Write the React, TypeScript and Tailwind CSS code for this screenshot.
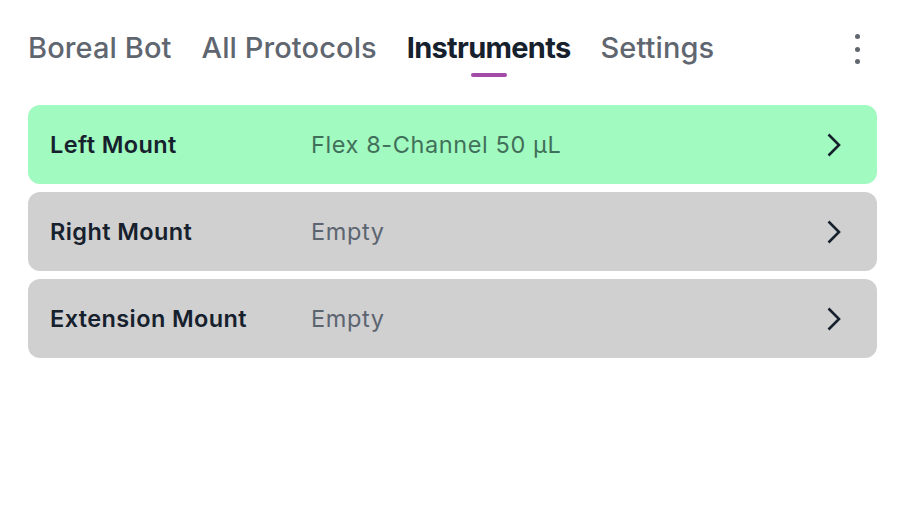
import React from 'react';

const tabs = ['Boreal Bot', 'All Protocols', 'Instruments', 'Settings'];

const mounts = [
  { label: 'Left Mount', value: 'Flex 8-Channel 50 µL', attached: true },
  { label: 'Right Mount', value: 'Empty', attached: false },
  { label: 'Extension Mount', value: 'Empty', attached: false },
];

const Chevron = () => (
  <svg width="16" height="26" viewBox="0 0 16 26" fill="none" className="shrink-0">
    <path d="M2.5 2.5 L13 13 L2.5 23.5" stroke="#16212d" strokeWidth="2.6" strokeLinecap="butt" strokeLinejoin="miter" />
  </svg>
);

const App: React.FC = () => {
  return (
    <div
      className="w-[910px] h-[529px] bg-white"
      style={{ fontFamily: 'Inter, "Noto Sans", "Liberation Sans", sans-serif' }}
    >
      {/* top nav */}
      <div className="flex items-start justify-between pl-[28px] pr-[50px] pt-[29px]">
        <div className="flex gap-[30px]">
          {tabs.map(tab => {
            const active = tab === 'Instruments';
            return (
              <div key={tab} className="flex flex-col items-center">
                <span
                  className={`text-[29px] leading-[38px] ${
                    active ? 'font-bold tracking-[-0.7px] text-[#16212d]' : 'font-medium tracking-[0.1px] text-[#5f6670]'
                  }`}
                >
                  {tab}
                </span>
                <span
                  className={`mt-[6px] h-[4px] w-[36px] rounded-full ${active ? 'bg-[#a44ba9]' : 'bg-transparent'}`}
                />
              </div>
            );
          })}
        </div>
        <div className="flex flex-col items-center gap-[7.5px] pt-[5px]">
          <span className="w-[5px] h-[5px] rounded-full bg-[#5f6670]" />
          <span className="w-[5px] h-[5px] rounded-full bg-[#5f6670]" />
          <span className="w-[5px] h-[5px] rounded-full bg-[#5f6670]" />
        </div>
      </div>

      {/* instrument list */}
      <div className="flex flex-col gap-[8px] pl-[28px] pr-[33px] mt-[28px]">
        {mounts.map(m => (
          <div
            key={m.label}
            className={`flex items-center h-[79px] rounded-[12px] pl-[22px] pr-[35px] ${
              m.attached ? 'bg-[#a1fac0]' : 'bg-[#d0d0d0]'
            }`}
          >
            <span className="w-[261px] shrink-0 text-[23.5px] tracking-[0.4px] font-semibold text-[#16212d]">
              {m.label}
            </span>
            <span
              className={`flex-1 text-[23.5px] tracking-[0.6px] font-normal ${
                m.attached ? 'text-[#41705a]' : 'text-[#5c6470]'
              }`}
            >
              {m.value}
            </span>
            <Chevron />
          </div>
        ))}
      </div>
    </div>
  );
};

export default App;
